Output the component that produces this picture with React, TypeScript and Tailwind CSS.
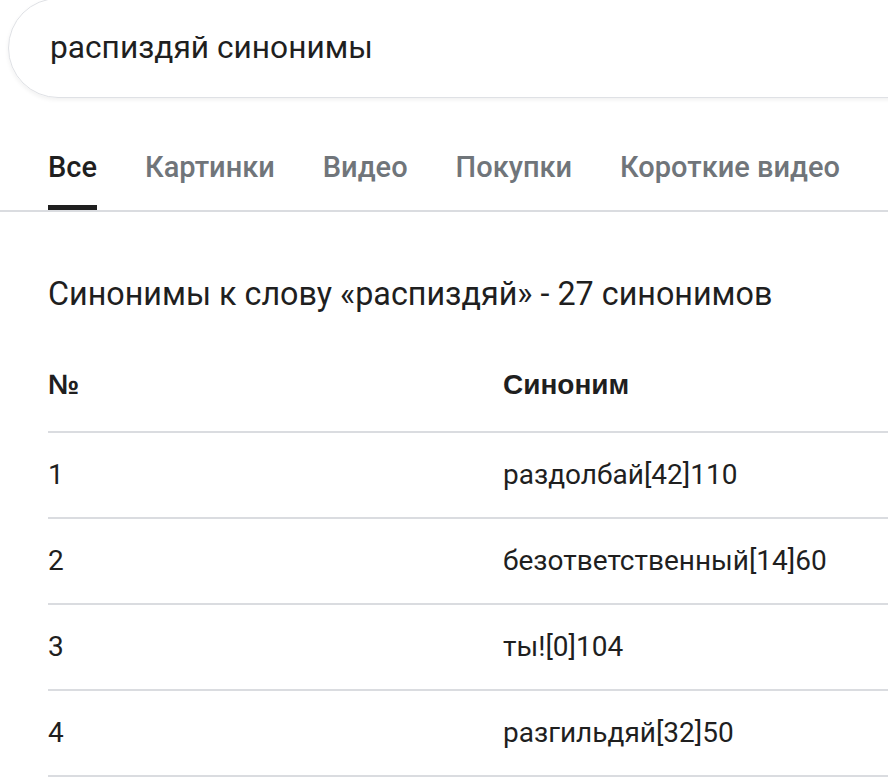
const tabs = ["Все", "Картинки", "Видео", "Покупки", "Короткие видео"];

const rows = [
  { n: "1", word: "раздолбай[42]110" },
  { n: "2", word: "безответственный[14]60" },
  { n: "3", word: "ты![0]104" },
  { n: "4", word: "разгильдяй[32]50" },
];

export default function App() {
  return (
    <div className="w-[888px] h-[780px] overflow-hidden bg-white font-['Roboto',sans-serif] text-[#1f1f1f]">
      {/* Search box, top cut off */}
      <div className="ml-2 -mt-[2px] h-[100px] w-[960px] rounded-[50px] border border-[#dfe1e5] shadow-[0_2px_4px_rgba(0,0,0,0.06)] flex items-center pl-[41px] text-[31.7px]">
        распиздяй синонимы
      </div>

      {/* Tabs */}
      <div className="mt-[51px] flex gap-[48px] pl-12 border-b-2 border-[#dadce0]">
        {tabs.map((t, i) => (
          <div key={t} className="flex flex-col">
            <span
              className={
                i === 0
                  ? "text-[29px] leading-[37px] font-medium text-[#1f1f1f]"
                  : "text-[29px] leading-[37px] font-medium text-[#70757a]"
              }
            >
              {t}
            </span>
            <div className={i === 0 ? "mt-[19px] h-[5px] bg-[#1f1f1f]" : "mt-[19px] h-[5px]"} />
          </div>
        ))}
      </div>

      {/* Results */}
      <div className="pl-12">
        <h2 className="mt-[62px] text-[32.3px] leading-[40px] font-normal">
          Синонимы к слову «распиздяй» - 27 синонимов
        </h2>

        <div className="mt-[53px] w-[1000px]">
          <div className="grid grid-cols-[455px_1fr] pb-[28px] border-b-2 border-[#dadce0] font-['Liberation_Sans',sans-serif] font-bold text-[28px] leading-[36px]">
            <div>№</div>
            <div>Синоним</div>
          </div>
          {rows.map((r) => (
            <div
              key={r.n}
              className="grid grid-cols-[455px_1fr] h-[86px] items-center border-b-2 border-[#dadce0] text-[28px]"
            >
              <div>{r.n}</div>
              <div>{r.word}</div>
            </div>
          ))}
        </div>
      </div>
    </div>
  );
}
